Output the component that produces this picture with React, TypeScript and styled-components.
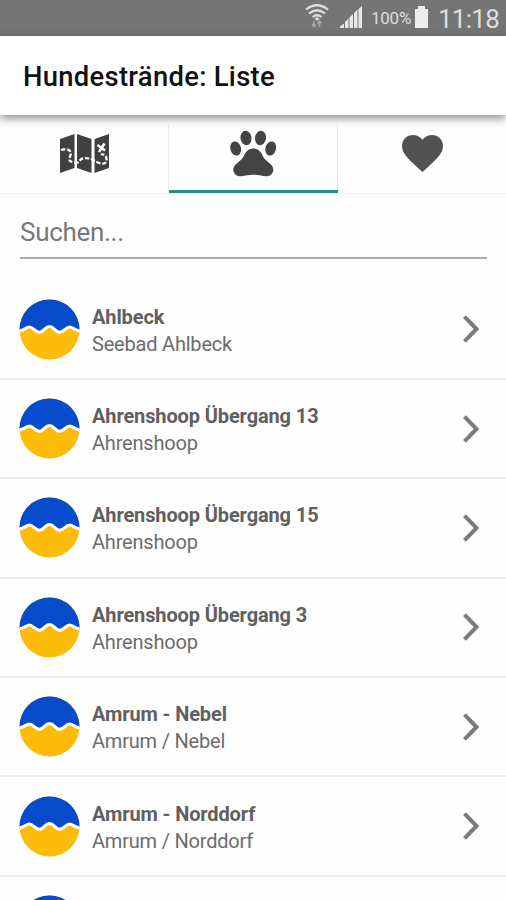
import React from 'react';
import styled, { createGlobalStyle } from 'styled-components';

const GlobalStyle = createGlobalStyle`
  * { box-sizing: border-box; }
  body { margin: 0; background: #fff; font-family: Roboto, sans-serif; overflow: hidden; }
`;

const Screen = styled.main`
  display: flex;
  flex-direction: column;
  width: 506px;
  height: 900px;
  overflow: hidden;
  background: #fefefe;
`;

const StatusBar = styled.div`
  flex: none;
  display: flex;
  align-items: center;
  justify-content: flex-end;
  height: 35.5px;
  padding-right: 7px;
  background: #757575;
  color: #dedede;
`;

const Icon = styled.svg`
  display: block;
  flex: none;
`;

const Battery = styled.span`
  width: 41px;
  margin: 1px 2px 0 8px;
  font-size: 17px;
  letter-spacing: -0.25px;
  white-space: nowrap;
`;

const Clock = styled.span`
  width: 61px;
  margin: 3px 0 0 9px;
  font-size: 26px;
  line-height: 32px;
  letter-spacing: -0.75px;
  white-space: nowrap;
`;

const Header = styled.header`
  flex: none;
  position: relative;
  display: flex;
  align-items: center;
  height: 79.5px;
  padding: 3px 24px 0 23px;
  background: #fff;
  box-shadow: 0 3px 9px rgba(0, 0, 0, 0.47);
`;

const Title = styled.h1`
  margin: 0;
  color: #111;
  font-size: 27.4px;
  font-weight: 500;
  line-height: 36px;
  letter-spacing: 0.3px;
  white-space: nowrap;
`;

const Tabs = styled.nav`
  flex: none;
  display: grid;
  grid-template-columns: 169px 169px 168px;
  height: 79px;
  padding-top: 9px;
  border-bottom: 1px solid #f2f2f2;
`;

const Tab = styled.button<{ $active?: boolean }>`
  display: flex;
  justify-content: center;
  align-items: flex-start;
  height: 69px;
  padding: 0;
  border: 0;
  border-bottom: ${({ $active }) => ($active ? '3px solid #239182' : '0')};
  background: none;
  box-shadow: ${({ $active }) => ($active ? '-1px 0 #ececec, inset -1px 0 #ececec' : 'none')};
`;

const Search = styled.input`
  flex: none;
  height: 51px;
  margin: 14px 19px 21.5px 20px;
  padding: 0 0 1px;
  border: 0;
  border-bottom: 2px solid #a9adab;
  outline: 0;
  background: transparent;
  font: 400 26px/32px Roboto, sans-serif;
  letter-spacing: -0.3px;
  &::placeholder { color: #777; opacity: 1; }
`;

const List = styled.ul`
  margin: 0;
  padding: 0;
  list-style: none;
`;

const Row = styled.li`
  display: flex;
  align-items: center;
  height: 99.4px;
  padding: 0 26px 0 19px;
  border-bottom: 2px solid #efefef;
`;

const Labels = styled.div`
  flex: 1;
  margin: 3px 0 0 12px;
  white-space: nowrap;
`;

const Name = styled.div`
  color: #606060;
  font-size: 20px;
  font-weight: 700;
  line-height: 27px;
  letter-spacing: -0.12px;
`;

const Place = styled.div`
  color: #6c6c6c;
  font-size: 20px;
  line-height: 27px;
  letter-spacing: -0.2px;
`;

const Beach = () => (
  <Icon width="61" height="61" viewBox="0 0 61 61">
    <defs>
      <clipPath id="beach-disc"><circle cx="30.5" cy="30.5" r="30" /></clipPath>
    </defs>
    <g clipPath="url(#beach-disc)">
      <path d="M0 0H61V61H0Z" fill="#fdbb0a" />
      <path d="M0 0H61V31C55 31 54 27.5 50.5 27.5S45 32.5 40.5 32.5 35 27.5 30.5 27.5 25 32.5 20.5 32.5 14 27.5 10.5 27.5 6 31 0 31Z" fill="#054bcb" />
      <path d="M-1 32C5 32 7 28 10.5 28S16 33.3 20.5 33.3 26 27.5 30.5 27.5 36 33.3 40.5 33.3 47 28 50.5 28 56 32 62 32" fill="none" stroke="#fff" strokeWidth="3.2" />
    </g>
  </Icon>
);

const Chevron = () => (
  <Icon width="18" height="30" viewBox="0 0 18 30">
    <path d="M2.5 2.7 14.5 15 2.5 27.3" fill="none" stroke="#7b7b7b" strokeWidth="4" />
  </Icon>
);

const MapIcon = () => (
  <Icon width="50" height="60" viewBox="0 0 50 60">
    <path d="m0 15 14.5-5v34L0 49ZM17 10l14.5 5v34L17 44ZM34.5 15 49 10v34l-14.5 5Z" fill="#414141" />
    <path d="M1 26C7 24 12 26 10.5 31S8 37 14 38.5 19 35 23 34.3 31 34.5 35 37 46 42 46.5 36 43 31 41 30" fill="none" stroke="#fff" strokeWidth="2.3" strokeDasharray="4.3 1.8" />
    <path d="m37.5 21 7.5 5.5M44.5 19.5l-5.5 8.5" stroke="#fff" strokeWidth="2.5" />
  </Icon>
);

const PawIcon = () => (
  <Icon width="48" height="60" viewBox="0 0 48 60" fill="#444">
    <ellipse cx="5.7" cy="24.5" rx="5.3" ry="7.2" transform="rotate(-16 5.7 24.5)" />
    <ellipse cx="16" cy="14" rx="5.5" ry="7.3" transform="rotate(-7 16 14)" />
    <ellipse cx="30.5" cy="14" rx="5.5" ry="7.3" transform="rotate(7 30.5 14)" />
    <ellipse cx="40.7" cy="24.5" rx="5.3" ry="7.2" transform="rotate(16 40.7 24.5)" />
    <path d="M23.3 24.5c-4.7 0-7.5 3-9.2 7-1.7 4-5.2 6-8.2 8.7-3 2.8-3.4 6.8-1.2 9.5 2.7 3.4 6.9 2.8 10.9 1.9 5.2-1 10.2-1 15.4 0 4 .9 8.2 1.5 10.9-1.9 2.2-2.7 1.8-6.7-1.2-9.5-3-2.7-6.5-4.7-8.2-8.7-1.7-4-4.5-7-9.2-7Z" />
  </Icon>
);

const HeartIcon = () => (
  <Icon width="43" height="60" viewBox="0 0 43 60">
    <path d="M21.5 48 16.5 43.4C6 34 1 29 1 22 1 15.5 6 11 12 11c3.7 0 7.3 1.8 9.5 4.7C23.7 12.8 27.3 11 31 11c6 0 11 4.5 11 11 0 7-5 12-15.5 21.4Z" fill="#525252" />
  </Icon>
);

const beaches = [
  ['Ahlbeck', 'Seebad Ahlbeck'],
  ['Ahrenshoop Übergang 13', 'Ahrenshoop'],
  ['Ahrenshoop Übergang 15', 'Ahrenshoop'],
  ['Ahrenshoop Übergang 3', 'Ahrenshoop'],
  ['Amrum - Nebel', 'Amrum / Nebel'],
  ['Amrum - Norddorf', 'Amrum / Norddorf'],
  ['', ''],
];

export default function App() {
  return (
    <Screen>
      <GlobalStyle />
      <StatusBar>
        <Icon width="58" height="35" viewBox="0 0 58 35">
          <g fill="none" stroke="#dedede" strokeWidth="2.2">
            <path d="M1 9.5Q12 1 23 9.5M4 13.5Q12 7 20 13.5M7.5 17Q12 13.5 16.5 17" />
          </g>
          <path d="m9.5 18.7 2.5-1.7 2.5 1.7-2.5 2Z" fill="#dedede" />
          <path d="M9 21v5.5m-2-2.3 2 2.3 2-2.3M14.5 27v-6m-2 2.5 2-2.5 2 2.5" fill="none" stroke="#aaa" strokeWidth="1.5" />
          <path d="M35 28v-1.5l4-3V28ZM40 28v-6l3.5-3.5V28ZM44.5 28V17.5l3.5-3.5v14ZM49 28V13l3.5-3.5V28ZM53.5 28V9l3.5-3v22Z" fill="#e8e8e8" />
        </Icon>
        <Battery>100%</Battery>
        <Icon width="15" height="35" viewBox="0 0 15 35">
          <path d="M4 6h7v3h3v19H1V9h3Z" fill="#ededed" />
        </Icon>
        <Clock>11:18</Clock>
      </StatusBar>
      <Header><Title>Hundestrände: Liste</Title></Header>
      <Tabs>
        <Tab aria-label="Karte"><MapIcon /></Tab>
        <Tab $active aria-label="Liste"><PawIcon /></Tab>
        <Tab aria-label="Favoriten"><HeartIcon /></Tab>
      </Tabs>
      <Search placeholder="Suchen..." />
      <List>
        {beaches.map(([name, place], i) => (
          <Row key={i}>
            <Beach />
            <Labels>
              <Name>{name}</Name>
              <Place>{place}</Place>
            </Labels>
            <Chevron />
          </Row>
        ))}
      </List>
    </Screen>
  );
}
